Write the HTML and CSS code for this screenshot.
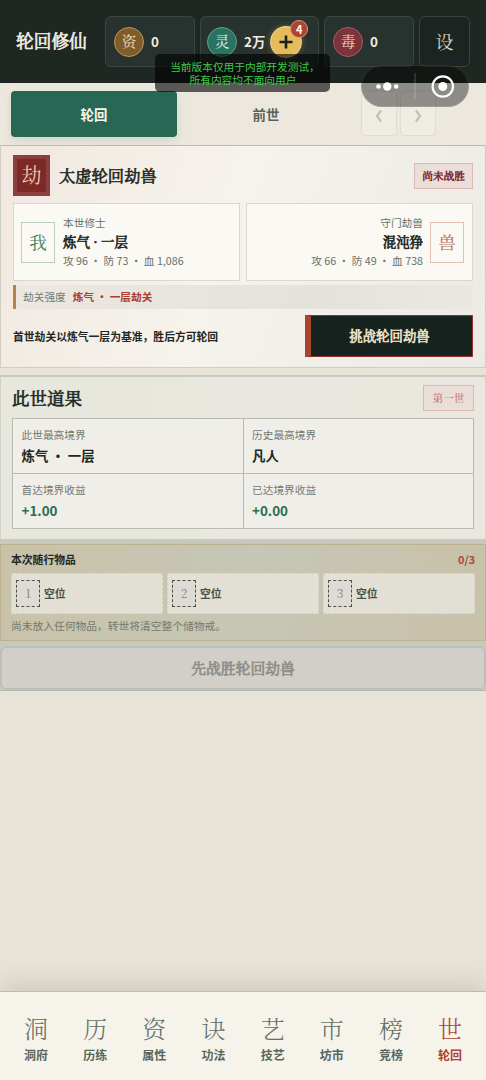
FILE: index.html
```html
<!DOCTYPE html>
<html lang="zh-CN">
<head>
<meta charset="utf-8">
<title>轮回修仙</title>
<link rel="stylesheet" href="styles.css">
</head>
<body>
<div class="app">
  <header class="top">
    <h1 class="brand serif">轮回修仙</h1>
    <div class="res"><span class="coin gold serif">资</span><b>0</b></div>
    <div class="res spirit"><span class="coin jade serif">灵</span><b>2万</b>
      <span class="plus"><svg viewBox="0 0 32 32" width="32" height="32"><circle cx="16" cy="16" r="15.300" fill="#e6bb5a" stroke="#efd48d" stroke-width="1.2"/><path d="M16 9.500v13M9.500 16h13" stroke="#18231f" stroke-width="2.600"/></svg><i class="badge">4</i></span>
    </div>
    <div class="res"><span class="coin red serif">毒</span><b>0</b></div>
    <div class="setting serif">设</div>
    <div class="notice"><span>当前版本仅用于内部开发测试，</span><span>所有内容均不面向用户</span></div>
    <div class="capsule"><svg viewBox="0 0 108 42" width="108" height="42"><g fill="#fff"><circle cx="17.500" cy="21.500" r="2.300"/><circle cx="26.300" cy="21.500" r="4.200"/><circle cx="35.200" cy="21.500" r="2.300"/><circle cx="81.800" cy="21.500" r="4.500"/></g><circle cx="81.800" cy="21.500" r="10.200" fill="none" stroke="#fff" stroke-width="2.200"/><path d="M54 8v26" stroke="#fff" stroke-opacity=".25"/></svg></div>
  </header>

  <nav class="tabs">
    <div class="tab active">轮回</div>
    <div class="tab">前世</div>
    <div class="arrows">
      <span class="arrow"><svg viewBox="0 0 12 14" width="12" height="14"><path d="M8 1.500Q5.500 5 4 7Q5.500 9 8 12.500"/></svg></span>
      <span class="arrow"><svg viewBox="0 0 12 14" width="12" height="14"><path d="M4 1.500Q6.500 5 8 7Q6.500 9 4 12.500"/></svg></span>
    </div>
  </nav>

  <section class="trial">
    <div class="trial-head">
      <span class="seal serif">劫</span>
      <h2 class="serif">太虚轮回劫兽</h2>
      <span class="tag serif strong">尚未战胜</span>
    </div>
    <div class="versus">
      <div class="fighter">
        <span class="face serif">我</span>
        <div class="info"><small>本世修士</small><strong class="serif">炼气 · 一层</strong><small>攻 96 ・ 防 73 ・ 血 1,086</small></div>
      </div>
      <div class="fighter beast">
        <div class="info"><small>守门劫兽</small><strong class="serif">混沌狰</strong><small>攻 66 ・ 防 49 ・ 血 738</small></div>
        <span class="face serif">兽</span>
      </div>
    </div>
    <div class="power"><span>劫关强度</span><b>炼气 ・ 一层劫关</b></div>
    <div class="action"><p>首世劫关以炼气一层为基准，胜后方可轮回</p><button class="fight serif">挑战轮回劫兽</button></div>
  </section>

  <section class="fruit">
    <div class="fruit-head"><h2 class="serif">此世道果</h2><span class="tag serif">第一世</span></div>
    <div class="stats">
      <div><small>此世最高境界</small><b>炼气 ・ 一层</b></div>
      <div><small>历史最高境界</small><b>凡人</b></div>
      <div><small>首达境界收益</small><b class="gain">+1.00</b></div>
      <div><small>已达境界收益</small><b class="gain">+0.00</b></div>
    </div>
  </section>

  <section class="rebirth">
    <div class="carry">
      <div class="carry-head"><b>本次随行物品</b><b class="count">0/3</b></div>
      <div class="slots">
        <div class="slot"><i class="serif">1</i><b>空位</b></div>
        <div class="slot"><i class="serif">2</i><b>空位</b></div>
        <div class="slot"><i class="serif">3</i><b>空位</b></div>
      </div>
      <p>尚未放入任何物品，转世将清空整个储物戒。</p>
    </div>
    <button class="locked serif">先战胜轮回劫兽</button>
  </section>

  <footer class="bottom">
    <div><span class="serif">洞</span><b>洞府</b></div>
    <div><span class="serif">历</span><b>历练</b></div>
    <div><span class="serif">资</span><b>属性</b></div>
    <div><span class="serif">诀</span><b>功法</b></div>
    <div><span class="serif">艺</span><b>技艺</b></div>
    <div><span class="serif">市</span><b>坊市</b></div>
    <div><span class="serif">榜</span><b>竞榜</b></div>
    <div class="on"><span class="serif">世</span><b>轮回</b></div>
  </footer>
</div>
</body>
</html>
```
FILE: styles.css
```css
* { box-sizing: border-box; }
body { margin: 0; background: #e7e3d7; color: #1d2824; font-family: "Noto Sans CJK SC", sans-serif; }
h1, h2, p { margin: 0; }
i { font-style: normal; }
button { padding: 0; margin: 0; }
svg { display: block; }
.serif { font-family: "Noto Serif CJK SC", "Noto Serif SC", "Source Han Serif SC", "Noto Sans CJK SC", serif; }
/* evenly thickened serif headings */
.brand, h2, .tag.strong, .info strong, .fight, .locked { font-weight: 400; -webkit-text-stroke: .65px currentColor; }
.app { height: 1080px; display: flex; flex-direction: column; overflow: hidden; }

.top { position: relative; flex: none; height: 83px; padding: 16px; display: flex; background: #1e2722; }
.brand { width: 89px; flex: none; font-size: 17.7px; line-height: 49px; color: #f4efe3; white-space: nowrap; }
.res { flex: none; width: 90px; height: 51px; margin-right: 5px; padding-left: 8px; display: flex; align-items: center; gap: 7px; border: 1px solid #3a4740; border-radius: 6px; background: #28322e; color: #f1ece0; font-size: 13.4px; }
.res b { line-height: 20px; padding-bottom: 1px; }
.res.spirit { width: 119px; padding-left: 6px; }
.coin { flex: none; width: 30px; height: 30px; border-radius: 50%; border: 1px solid #b99a61; text-align: center; font-size: 14.7px; line-height: 26px; color: #f0dfbd; }
.gold { background: #805c2a; }
.jade { background: #287363; border-color: #68a08d; color: #e2eee0; }
.red { background: #7c343a; border-color: #a65d60; color: #f0cfc6; }
.plus { position: relative; flex: none; margin-left: -2px; border-radius: 50%; box-shadow: 0 0 7px #e9bd5855; }
.badge { position: absolute; left: 20px; top: -6px; width: 18px; height: 18px; border: 1px solid #d99b7d; border-radius: 50%; background: #ad432f; color: #fff; font-size: 11px; font-weight: 700; line-height: 16px; text-align: center; }
.setting { flex: none; width: 51px; height: 51px; border: 1px solid #3b443b; border-radius: 6px; background: #1b2420; color: #ddd5bb; font-size: 18px; line-height: 48px; text-align: center; }
.notice { position: absolute; z-index: 2; left: 155px; top: 54px; width: 175px; height: 38px; padding: 7px 0 0 1px; border-radius: 5px; background: rgba(0, 0, 0, .62); color: #3fc849; font-size: 10.7px; line-height: 12.5px; text-align: center; white-space: nowrap; }
.notice span { display: block; margin: 0 -2px; }
.notice span:first-child { padding-left: 4px; }
.capsule { position: absolute; z-index: 2; left: 361px; top: 65px; border-radius: 21px; background: rgba(0, 0, 0, .4); box-shadow: inset 0 0 0 1px rgba(255, 255, 255, .12); }

.tabs { flex: none; height: 62px; padding: 8px 0 0 11px; display: flex; gap: 6px; background: #ece8de; }
.tab { width: 166px; height: 46px; font-size: 13.4px; line-height: 46px; font-weight: 700; text-align: center; color: #59635b; border-radius: 4px; }
.tab.active { background: #286753; color: #fbf6e9; box-shadow: 0 4px 10px rgba(40, 103, 83, .13); }
.arrows { display: flex; gap: 3px; margin-left: 6px; }
.arrow { width: 36px; height: 45px; border: 1px solid #dfddd1; border-radius: 4px; background: #efece2; display: grid; place-items: center; padding-top: 5px; }
.arrow path { fill: none; stroke: #bbc3b1; stroke-width: 2.2; }

.trial { flex: none; height: 223px; margin-bottom: 7px; padding: 9px 12px 0; border: 1px solid #cfcec2; border-top-color: #b9bbb0; background: linear-gradient(110deg, #f1e8e0 0, #f6f3ec 45%, #ebeae5 100%); }
.trial-head { height: 41px; display: flex; align-items: center; }
.seal { width: 37px; height: 41px; border: 4px solid #8b403f; background: #7d2928; color: #f1cda9; font-size: 20px; line-height: 32px; text-align: center; }
.trial h2 { margin-left: 9px; padding-bottom: 1px; flex: 1; font-size: 16.3px; line-height: 24px; }
.tag { height: 26px; padding: 0 7px; border: 1px solid #dcb9b3; background: #ebddd7; color: #b25d57; font-size: 10.7px; line-height: 23px; }
.tag.strong { color: #7a2428; -webkit-text-stroke-width: .5px; }
.versus { display: grid; grid-template-columns: 227px 227px; gap: 6px; margin-top: 7px; }
.fighter { height: 78px; padding: 0 7px; display: flex; align-items: center; gap: 8px; border: 1px solid #d5d9cf; background: #faf9f4; }
.fighter.beast { padding-right: 8px; justify-content: flex-end; text-align: right; gap: 7px; border-color: #ddd8ce; }
.face { flex: none; width: 34px; height: 41px; border: 1px solid #b8d0c2; color: #3f7b66; font-size: 17.5px; line-height: 37px; text-align: center; }
.beast .face { border-color: #e6bfb2; color: #b26c58; }
.info { display: flex; flex-direction: column; padding-bottom: 1px; white-space: nowrap; }
.info small { font-size: 10.7px; line-height: 17px; color: #67716a; }
.info strong { font-size: 13.4px; line-height: 21px; }
.power { height: 24px; margin-top: 4px; padding-left: 7px; border-left: 3px solid #b78443; background: linear-gradient(90deg, #ece7e0, #e3e3dc 65%, #e9e8e1); display: flex; gap: 7px; font-size: 10.7px; line-height: 23px; color: #777b70; }
.power b { color: #ab3e30; }
.action { margin-top: 6px; display: flex; justify-content: space-between; align-items: center; }
.action p { font-size: 10.8px; font-weight: 700; }
.fight { width: 168px; height: 42px; padding-right: 4px; border: 1px solid #8e352b; border-left: 6px solid #a9432e; background: #17231e; color: #eee4c9; font-size: 13.4px; line-height: 38px; }

.fruit { flex: none; height: 164px; padding: 8px 11px 0; border: 1px solid #d2d1c7; border-top: 2px solid #c6cbbd; border-bottom: 0; background: linear-gradient(90deg, #e7e7de, #ebe7e0); }
.fruit-head { height: 26px; display: flex; justify-content: space-between; align-items: center; }
.fruit h2 { padding-bottom: 1px; font-size: 17.5px; line-height: 24px; }
.fruit .tag { padding: 0 8.5px; }
.stats { margin-top: 7px; width: 462px; height: 111px; display: grid; grid-template-columns: 1fr 1fr; grid-template-rows: 1fr 1fr; gap: 1px; padding: 1px; background: #b9bab1; }
.stats > div { padding: 7px 8.5px 0; display: flex; flex-direction: column; background: #f0eee8; }
.stats small { font-size: 10.7px; line-height: 18px; color: #747a71; }
.stats b { font-size: 13.4px; line-height: 22px; }
.stats .gain { color: #286e50; }

.rebirth { flex: none; height: 152px; padding-top: 5px; border-bottom: 1px solid #b7b9af; background: #c9c8be; }
.carry { height: 97px; padding: 5px 10px 0; border: 1px solid #bcb28f; background: linear-gradient(105deg, #c9c2a9, #c6c6b5 50%, #c9c1a9); }
.carry-head { height: 19px; display: flex; justify-content: space-between; font-size: 10.8px; line-height: 18px; }
.count { color: #ad4938; }
.slots { display: grid; grid-template-columns: repeat(3, 152px); gap: 4px; margin-top: 4px; }
.slot { height: 41px; padding-left: 4px; display: flex; align-items: center; gap: 4px; border: 1px dashed #d5d1c0; background: #e2dfd4; font-size: 10.8px; color: #46534a; }
.slot i { width: 24px; height: 27px; border: 1px dashed #4f5049; background: #dddbd3; color: #858379; font-size: 12px; line-height: 23px; text-align: center; }
.slot b { padding-bottom: 2px; }
.carry p { margin-top: 2px; font-size: 10.75px; line-height: 19px; color: #74796c; }
.locked { display: block; width: 100%; height: 44px; margin-top: 5px; border: 2px solid #bdc0b8; border-radius: 6px; background: #d1cfc7; color: #8d8d85; font-size: 14.8px; line-height: 38px; }

.bottom { flex: none; height: 89px; margin-top: auto; padding: 23px 6px 0 6.5px; display: grid; grid-template-columns: repeat(8, 59.15px); border-top: 1px solid #c0bca9; background: #f6f3eb; box-shadow: 0 -6px 24px rgba(64, 61, 40, .16); color: #627067; text-align: center; }
.bottom span { display: block; height: 28px; font-size: 24px; line-height: 26px; font-weight: 300; }
.bottom b { display: block; font-size: 12px; line-height: 23px; color: #59665c; }
.bottom .on, .bottom .on b { color: #ad4133; }
```
